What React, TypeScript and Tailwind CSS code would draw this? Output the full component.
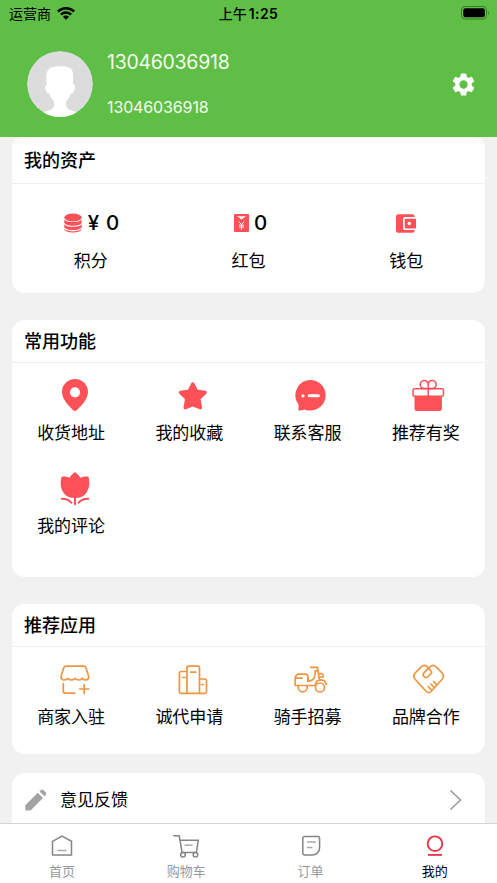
import type { ReactNode } from 'react';

const RED = '#fd5158';
const ORANGE = '#ee9642';

function Glyph({ children }: { children: ReactNode }) {
  return (
    <svg viewBox="0 0 32 32" className="ml-[7px] h-8 w-8 overflow-visible" fill="none">
      {children}
    </svg>
  );
}

function Line({ children }: { children: ReactNode }) {
  return (
    <Glyph>
      <g stroke={ORANGE} strokeWidth="1.7" strokeLinecap="round" strokeLinejoin="round">
        {children}
      </g>
    </Glyph>
  );
}

const features = [
  {
    label: '收货地址',
    icon: (
      <Glyph>
        <path
          fill={RED}
          fillRule="evenodd"
          d="M16 0C8.8 0 3 5.7 3 12.8 3 19 7.5 25 14.2 31.2q1.8 1.5 3.6 0C24.500 25 29 19 29 12.800 29 5.700 23.200 0 16 0Zm0 8.200a5.100 5.100 0 1 1 0 10.200 5.100 5.100 0 0 1 0-10.200Z"
        />
      </Glyph>
    ),
  },
  {
    label: '我的收藏',
    icon: (
      <Glyph>
        <path
          fill={RED}
          stroke={RED}
          strokeWidth="3.4"
          strokeLinejoin="round"
          d="m15.8 5 3.700 7.300 8.600 1.200-6.300 6 1.600 9.200-7.600-3-7.600 3 1.600-9.200-6.300-6 8.600-1.200z"
        />
      </Glyph>
    ),
  },
  {
    label: '联系客服',
    icon: (
      <Glyph>
        <path
          fill={RED}
          d="M16 1a15.300 15.300 0 1 1-6.500 29.400c-2 .9-4 1.400-5.600 1.100-.9-.2-.7-.8-.5-1.500.3-1.200.3-2.600-.1-4.700A15.300 15.300 0 0 1 16 1Z"
        />
        <circle cx="8" cy="16.800" r="1.600" fill="#fff" />
        <path d="M14.200 16.800h9.200" stroke="#fff" strokeWidth="3" strokeLinecap="round" />
      </Glyph>
    ),
  },
  {
    label: '推荐有奖',
    icon: (
      <Glyph>
        <g stroke={RED} strokeWidth="1.500">
          <path d="M15.200 9.500H11.500A4 4 0 1 1 15.200 5.500zM15.200 9.500h3.700a4 4 0 1 0-3.700-4z" />
          <rect x="0" y="9.700" width="30.500" height="7.600" rx="1.600" />
          <path d="M15.200 9v9" />
        </g>
        <path fill={RED} d="M1.500 17h27.400v12.500a2.500 2.500 0 0 1-2.500 2.500H4a2.500 2.500 0 0 1-2.500-2.500Z" />
      </Glyph>
    ),
  },
  {
    label: '我的评论',
    icon: (
      <Glyph>
        <path
          fill={RED}
          d="M16 .2c1 0 4.300 3.200 5.300 5.500 2.600-1.300 6-1.500 8.200-1 1.600 6.800.8 12.300-2.400 16.500-2.600 3.400-6.500 4.800-11.100 4.800s-8.500-1.400-11.100-4.800C1.700 17 .9 11.500 2.500 4.700c2.200-.5 5.600-.3 8.200 1C11.700 3.400 15 .2 16 .2Z"
        />
        <path
          d="M16 25v7.200M2.700 26.700c4-.1 7.500 1.400 9.700 4M29.300 26.700c-4-.1-7.500 1.400-9.700 4"
          stroke={RED}
          strokeWidth="2"
          strokeLinecap="round"
        />
      </Glyph>
    ),
  },
];

const apps = [
  {
    label: '商家入驻',
    icon: (
      <Line>
        <path d="M7.300 3.200h17.500c1.200 0 1.900.6 2.200 1.600l2.500 8c.8 2.600-.9 4.200-2.600 4.200-1.600 0-2.700-.7-3.700-1.700-1 1-2 1.700-3.600 1.700s-2.700-.7-3.600-1.700c-1 1-2 1.700-3.600 1.700s-2.700-.7-3.700-1.700c-1 1-2 1.700-3.600 1.700-2.200 0-3.700-1.800-2.900-4.200l2.500-8c.3-1 1.100-1.600 2.600-1.600Z" />
        <path d="M4.300 20.500v7.700c0 1.300.7 2 2 2h9.500M25.200 21.500v9M20.700 26h9" />
      </Line>
    ),
  },
  {
    label: '诚代申请',
    icon: (
      <Line>
        <rect x="10" y="3.200" width="12.500" height="27.200" rx="1.200" />
        <path d="M10 8.500H4a1.600 1.600 0 0 0-1.600 1.600v18.700a1.600 1.600 0 0 0 1.600 1.600h6M22.500 16h5.400a1.600 1.600 0 0 1 1.600 1.600v11.200a1.600 1.600 0 0 1-1.600 1.600h-5.400M13.700 9.200h5M5.700 14.500H8M24.500 21.500h2" />
      </Line>
    ),
  },
  {
    label: '骑手招募',
    icon: (
      <Line>
        <path d="M15.600 4.300h7M22.600 4.300v3.500h-2.500M22.600 4.300l1.500 11.300 1.800 1.500M20.100 7.800c.8 6.500-1.600 9.800-6.900 10.500v-3.600M25 10.700h1.800c1 .6 1.600 1.600 1.500 3.300h-3.200M.2 22.500v-7.300a4 4 0 0 1 4-4h6a2.600 2.600 0 0 1 2.600 2.600v4.500M1 15.200h6.200M.2 22.500h20c.6-3.700 2.700-5.600 5.600-5.600 2.800 0 4.800 2 5.400 4.400" />
        <circle cx="25" cy="24.500" r="4.500" />
        <path d="M3.200 22.500v1.800a4.500 4.500 0 0 0 9 0v-1.800" />
      </Line>
    ),
  },
  {
    label: '品牌合作',
    icon: (
      <Line>
        <path d="M15.900 5.300 14 3.600c-1.600-1.400-3.900-1.400-5.500.1L2.300 9.900c-1.900 2-1.900 4.600 0 6.600l11 12c1.500 1.500 3.200 1.500 4.700 0l11-12c1.800-2 1.800-4.600 0-6.600l-6.200-6.200c-1.600-1.500-3.900-1.500-5.500 0L11 9.900c-2.400 2.600 1.300 6.300 4 3.600l3.200-3.200c.6-.6.600-1.200 0-1.800l-2.300-3.200M15.200 23.500l2.700 2.800M17.900 21l2.700 2.900M20.600 18.500l2.700 2.900" />
      </Line>
    ),
  },
];

function Tile({ icon, label }: { icon: ReactNode; label: string }) {
  return (
    <div className="flex flex-col items-center">
      {icon}
      <span className="mt-[10px] -mb-px text-[17px] leading-6">{label}</span>
    </div>
  );
}

function Asset({ children, label }: { children: ReactNode; label: string }) {
  return (
    <div className="flex flex-col items-center">
      <div className="flex h-[26px] items-center text-[20.5px] font-medium">{children}</div>
      <span className="mt-[13px] text-[17px] leading-6">{label}</span>
    </div>
  );
}

function CardTitle({ children }: { children: ReactNode }) {
  return <h2 className="border-b border-[#eeeeee] pl-[12px] text-[18px] font-medium">{children}</h2>;
}

function Tab({ children, label, active = false }: { children: ReactNode; label: string; active?: boolean }) {
  return (
    <div className={active ? 'flex flex-col items-center text-black' : 'flex flex-col items-center text-[#999999]'}>
      <svg viewBox="0 0 28 26" className="h-[26px] w-7" fill="none" stroke={active ? '#e6394b' : '#858585'} strokeWidth="1.500">
        {children}
      </svg>
      <span className="mt-[3px] text-[13px] leading-[18px]">{label}</span>
    </div>
  );
}

export default function App() {
  return (
    <div className="flex h-[883px] w-[497px] flex-col overflow-hidden bg-[#f1f1f1] font-['Inter','Noto_Sans_CJK_SC',sans-serif] text-black">
      <header className="h-[137px] shrink-0 bg-[#5fbe46]">
        <div className="grid h-[26px] grid-cols-3 items-center pr-[7px] pl-[9px] text-[13px]">
          <div className="flex items-center gap-[6px]">
            <span className="text-[14px]">运营商</span>
            <svg viewBox="0 0 18 13" className="h-[13px] w-[18px]" fill="none" stroke="#000" strokeWidth="2.500">
              <path d="M.9 4.500C5.500.2 12.500.2 17.100 4.500M3.900 7.600c2.900-2.700 7.300-2.700 10.200 0" />
              <path d="M9 12.700 5.900 9.700c1.700-1.600 4.500-1.600 6.200 0Z" fill="#000" stroke="none" />
            </svg>
          </div>
          <div className="-ml-[2px] flex items-center justify-center gap-[2px] font-semibold">
            <span className="text-[14px] font-medium">上午</span>
            <span className="text-[14px] tracking-[0.4px]">1:25</span>
          </div>
          <svg viewBox="0 0 29 14" className="h-[14px] w-[29px] justify-self-end" fill="none">
            <rect x=".5" y=".5" width="25" height="12.500" rx="3.500" stroke="#397a29" />
            <rect x="2.300" y="2.300" width="21.500" height="9" rx="2" fill="#000" />
            <path d="M27.300 5v4c1.200-.8 1.200-3.200 0-4Z" fill="#397a29" />
          </svg>
        </div>
        <div className="flex items-start pt-[25px] pl-[27px]">
          <svg viewBox="0 0 66 66" className="h-[66px] w-[66px] rounded-full">
            <circle cx="33" cy="33" r="33" fill="#dcdcdc" />
            <path
              fill="#fff"
              d="M20 34c-1-6-1.200-11 .8-14.500C23 16 28 15 33.500 15.200c3 0 5.500-.3 7.500 1.300 3.500.2 4.500 3 5 6 .5 3.500 0 7.500-.2 10.500 2.500.3 2.700 2.500 1.700 5.500-.9 2.700-2.200 4.300-3.800 4.300-1 3-2.500 5.500-4.500 7.500v4.500c0 4 5.500 5 13 7C48 65 41 67 33 67s-15-2-19.200-5.200c7.500-2 13.200-3 13.200-7v-4.500c-2.200-2-3.500-4.500-4.500-7.500-1.700 0-3-1.600-3.900-4.300-1-2.700-.9-4.500 1.400-4.500Z"
            />
          </svg>
          <div className="ml-[14px] flex flex-col text-[#f4fcf0]">
            <span className="text-[19.500px] leading-[23px] tracking-[-0.28px]">13046036918</span>
            <span className="mt-[23px] text-[16px] leading-5 tracking-[-0.13px]">13046036918</span>
          </div>
          <svg viewBox="2 2 20 20" className="mt-[22px] mr-[22px] ml-auto h-[23px] w-[23px]" fill="#fff">
            <path d="M19.140 12.940c.04-.3.060-.61.060-.94s-.02-.64-.07-.94l2.030-1.580a.49.49 0 0 0 .12-.61l-1.920-3.320a.49.49 0 0 0-.59-.22l-2.390.96c-.5-.38-1.030-.7-1.620-.94l-.36-2.540a.48.48 0 0 0-.48-.41h-3.840a.47.47 0 0 0-.47.410l-.36 2.540c-.59.240-1.130.570-1.620.940l-2.390-.96a.48.48 0 0 0-.59.220L2.740 8.870c-.12.210-.08.470.120.610l2.030 1.580c-.05.300-.09.630-.09.940s.02.640.070.940l-2.030 1.580a.49.49 0 0 0-.12.610l1.920 3.320c.12.220.370.290.590.220l2.390-.96c.5.380 1.030.700 1.620.940l.360 2.540c.05.240.240.410.480.410h3.840c.240 0 .440-.170.470-.41l.360-2.540c.590-.24 1.130-.56 1.620-.94l2.390.960c.220.080.470 0 .590-.22l1.920-3.320a.48.48 0 0 0-.12-.61ZM12 15.600a3.600 3.600 0 1 1 0-7.200 3.600 3.600 0 0 1 0 7.200Z" />
          </svg>
        </div>
      </header>

      <main className="flex min-h-0 flex-1 flex-col overflow-hidden px-3">
        <section className="h-[156px] shrink-0 rounded-t-[9px] rounded-b-[13px] bg-white">
          <div className="pt-[2px] leading-[44px]"><CardTitle>我的资产</CardTitle></div>
          <div className="grid grid-cols-3 pt-[26px]">
            <Asset label="积分">
              <svg viewBox="0 0 18 20" className="h-5 w-[18px]" fill={RED}>
                <ellipse cx="9" cy="4.500" rx="8.700" ry="4" />
                <path d="M.3 6.200C2 10 16 10 17.700 6.200v3.300c-1 4.400-16.400 4.400-17.400 0Z" />
                <path d="M.3 11c1.700 3.800 15.700 3.800 17.400 0v3c-1 4.100-16.400 4.100-17.400 0Z" />
                <path d="M.3 15.500c1.700 3.600 15.700 3.600 17.400 0v.8c-1 4.300-16.400 4.300-17.400 0Z" />
              </svg>
              <span className="mr-[-2px] ml-[6px] pt-px tracking-[0.6px]">¥ 0</span>
            </Asset>
            <Asset label="红包">
              <svg viewBox="0 0 15 18" className="ml-1 h-[18px] w-[15px]">
                <rect width="15" height="18" rx=".8" fill={RED} />
                <path d="M3 2.200h9L7.500 5.500Z" fill="#fff" />
                <path d="m4.800 7.500 2.700 3.200 2.700-3.200M7.500 10.700v5M5 11.200h5M5 13.200h5" stroke="#fff" strokeWidth="1" fill="none" />
              </svg>
              <span className="ml-[5px] pt-px">0</span>
            </Asset>
            <Asset label="钱包">
              <svg viewBox="0 0 20 19" className="h-[19px] w-5">
                <path fill={RED} d="M2 .3h14.500a2 2 0 0 1 2 2v.8H9.200A2.200 2.200 0 0 0 7 5.300v8.500A2.200 2.200 0 0 0 9.200 16h9.300v.7a2 2 0 0 1-2 2H2a2 2 0 0 1-2-2V2.300a2 2 0 0 1 2-2Z" />
                <path fill={RED} d="M9.500 4.700H20v9.700H9.500a.8.8 0 0 1-.8-.8V5.500a.8.8 0 0 1 .8-.8Z" />
                <circle cx="13.300" cy="9.500" r="1.700" fill="#fff" />
              </svg>
            </Asset>
          </div>
        </section>

        <section className="mt-[27px] h-[257px] shrink-0 rounded-[13px] bg-white">
          <div className="pt-[2px] leading-[40px]"><CardTitle>常用功能</CardTitle></div>
          <div className="grid grid-cols-4 gap-y-7 pt-4">
            {features.map((item) => <Tile key={item.label} {...item} />)}
          </div>
        </section>

        <section className="mt-[27px] h-[150px] shrink-0 rounded-[13px] bg-white">
          <div className="pt-[2px] leading-[40px]"><CardTitle>推荐应用</CardTitle></div>
          <div className="grid grid-cols-4 pt-4">
            {apps.map((item) => <Tile key={item.label} {...item} />)}
          </div>
        </section>

        <section className="mt-[19px] flex h-[54px] shrink-0 items-center rounded-t-[13px] bg-white pr-[23px] pl-[13px]">
          <svg viewBox="0 0 22 22" className="h-[22px] w-[22px]" fill="#a3a3a3">
            <path d="M.3 21.500v-5.300L12.700 3.800l5.300 5.300L5.600 21.500Z" />
            <path d="m14.500 2.400 1.200-1.200c.9-.9 2-.9 2.900 0l2 2c.9.900.9 2 0 2.900l-1.200 1.200Z" />
          </svg>
          <span className="ml-[13px] text-[17px] leading-6">意见反馈</span>
          <svg viewBox="0 0 13 22" className="ml-auto h-[22px] w-[13px]" fill="none" stroke="#999" strokeWidth="1.500">
            <path d="m1.500 1.500 10 9.500-10 9.500" />
          </svg>
        </section>
      </main>

      <nav className="grid h-[60px] shrink-0 grid-cols-4 border-t border-[#d5d5d5] bg-white pt-[9px]">
        <Tab label="首页">
          <path d="M4.500 8.300 14 3.200l9.500 5.100v13.700h-19Z" />
          <path d="M9.500 17.500h9" stroke="#aaa" />
        </Tab>
        <Tab label="购物车">
          <path d="M1.200 2.800h6l2.900 16.700h14.300M8.200 7.200h18.100l-1.900 12.300" />
          <path d="M12.500 12.200h8" stroke="#aaa" />
          <circle cx="11" cy="21.800" r="2.300" fill="#fff" />
          <circle cx="23.500" cy="21.800" r="2.300" fill="#fff" />
        </Tab>
        <Tab label="订单">
          <path d="M7.800 3.500h12.800a2 2 0 0 1 2 2v9.200a7.300 7.300 0 0 1-7.300 7.300H7.800a2 2 0 0 1-2-2v-14.500a2 2 0 0 1 2-2Z" />
          <path d="M10 9h9M10 14.500h5.500" stroke="#aaa" />
        </Tab>
        <Tab label="我的" active>
          <circle cx="14" cy="10.700" r="7.300" strokeWidth="1.900" />
          <path d="M7 21.900h14" strokeWidth="1.900" />
        </Tab>
      </nav>
    </div>
  );
}
